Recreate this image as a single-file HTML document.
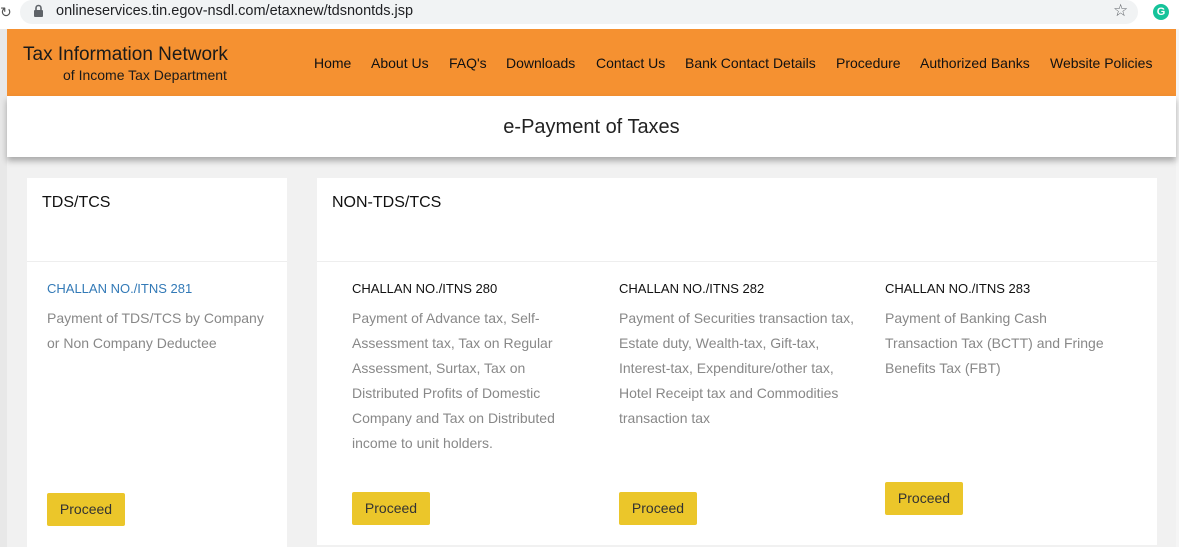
<!DOCTYPE html>
<html><head><meta charset="utf-8"><style>
*{margin:0;padding:0;box-sizing:border-box}
body{width:1179px;height:547px;overflow:hidden;background:#f1f1f1;font-family:"Liberation Sans",Arial,sans-serif;position:relative}
.abs{position:absolute}
.bar{left:0;top:0;width:1179px;height:29px;background:#fff}
.url{left:20px;top:0;width:1118px;height:24px;background:#f1f3f4;border-radius:12px}
.hdr{left:7px;top:29px;width:1169px;height:67px;background:#f59131}
.band{left:7px;top:96px;width:1169px;height:61px;background:#fff;box-shadow:0 4px 6px rgba(0,0,0,.3)}
.card{background:#fff}
.nav{top:55px;font-size:14px;color:#111}
.ch{font-size:13px;color:#111}
.desc{font-size:14px;color:#888;line-height:25px}
.btn{background:#ebc62a;color:#333;font-size:14px;text-align:center;line-height:33px;width:78px;height:33px;border-radius:2px}
</style></head><body>
<div class="abs bar"></div>
<div class="abs" style="left:0;top:4px;font-size:14px;color:#555">&#x21bb;</div>
<div class="abs url"></div>
<svg class="abs" style="left:33px;top:4px" width="11" height="14" viewBox="0 0 11 14"><path d="M3 6V4a2.5 2.5 0 0 1 5 0v2" fill="none" stroke="#5f6368" stroke-width="1.6"/><rect x="1" y="6" width="9" height="7" rx="1" fill="#5f6368"/></svg>
<div class="abs" style="left:56px;top:3px;font-size:14.5px;color:#202124">onlineservices.tin.egov-nsdl.com/etaxnew/tdsnontds.jsp</div>
<div class="abs" style="left:1113px;top:1px;font-size:17px;color:#5f6368">&#9734;</div>
<div class="abs" style="left:1153px;top:4px;width:16px;height:16px;border-radius:50%;background:#15c39a;color:#fff;font-size:11px;font-weight:bold;text-align:center;line-height:16px">G</div>
<div class="abs" style="left:0;top:29px;width:7px;height:518px;background:#e8e8e8"></div>
<div class="abs" style="left:1176px;top:29px;width:3px;height:518px;background:#f5f5f5"></div>
<div class="abs hdr"></div>
<div class="abs" style="left:23px;top:44px;font-size:19px;color:#1a1a1a">Tax Information Network</div>
<div class="abs" style="left:63px;top:67px;font-size:14px;color:#1a1a1a">of Income Tax Department</div>
<div class="abs nav" style="left:314px">Home</div>
<div class="abs nav" style="left:371px">About Us</div>
<div class="abs nav" style="left:449px">FAQ's</div>
<div class="abs nav" style="left:506px">Downloads</div>
<div class="abs nav" style="left:596px">Contact Us</div>
<div class="abs nav" style="left:685px">Bank Contact Details</div>
<div class="abs nav" style="left:836px">Procedure</div>
<div class="abs nav" style="left:920px">Authorized Banks</div>
<div class="abs nav" style="left:1050px">Website Policies</div>
<div class="abs band"></div>
<div class="abs" style="left:7px;top:116px;width:1169px;text-align:center;font-size:20px;color:#222">e-Payment of Taxes</div>

<div class="abs card" style="left:27px;top:178px;width:260px;height:369px"></div>
<div class="abs" style="left:27px;top:261px;width:260px;height:1px;background:#eee"></div>
<div class="abs" style="left:42px;top:194px;font-size:16px;color:#111">TDS/TCS</div>
<div class="abs ch" style="left:47px;top:281px;color:#337ab7">CHALLAN NO./ITNS 281</div>
<div class="abs desc" style="left:47px;top:306px;width:222px">Payment of TDS/TCS by Company or Non Company Deductee</div>
<div class="abs btn" style="left:47px;top:493px">Proceed</div>

<div class="abs card" style="left:317px;top:178px;width:840px;height:367px"></div>
<div class="abs" style="left:317px;top:261px;width:840px;height:1px;background:#eee"></div>
<div class="abs" style="left:332px;top:194px;font-size:16px;color:#111">NON-TDS/TCS</div>

<div class="abs ch" style="left:352px;top:281px">CHALLAN NO./ITNS 280</div>
<div class="abs desc" style="left:352px;top:306px;width:220px">Payment of Advance tax, Self-Assessment tax, Tax on Regular Assessment, Surtax, Tax on Distributed Profits of Domestic Company and Tax on Distributed income to unit holders.</div>
<div class="abs btn" style="left:352px;top:492px">Proceed</div>

<div class="abs ch" style="left:619px;top:281px">CHALLAN NO./ITNS 282</div>
<div class="abs desc" style="left:619px;top:306px;width:240px">Payment of Securities transaction tax, Estate duty, Wealth-tax, Gift-tax, Interest-tax, Expenditure/other tax, Hotel Receipt tax and Commodities transaction tax</div>
<div class="abs btn" style="left:619px;top:492px">Proceed</div>

<div class="abs ch" style="left:885px;top:281px">CHALLAN NO./ITNS 283</div>
<div class="abs desc" style="left:885px;top:306px;width:225px">Payment of Banking Cash Transaction Tax (BCTT) and Fringe Benefits Tax (FBT)</div>
<div class="abs btn" style="left:885px;top:482px">Proceed</div>
</body></html>
